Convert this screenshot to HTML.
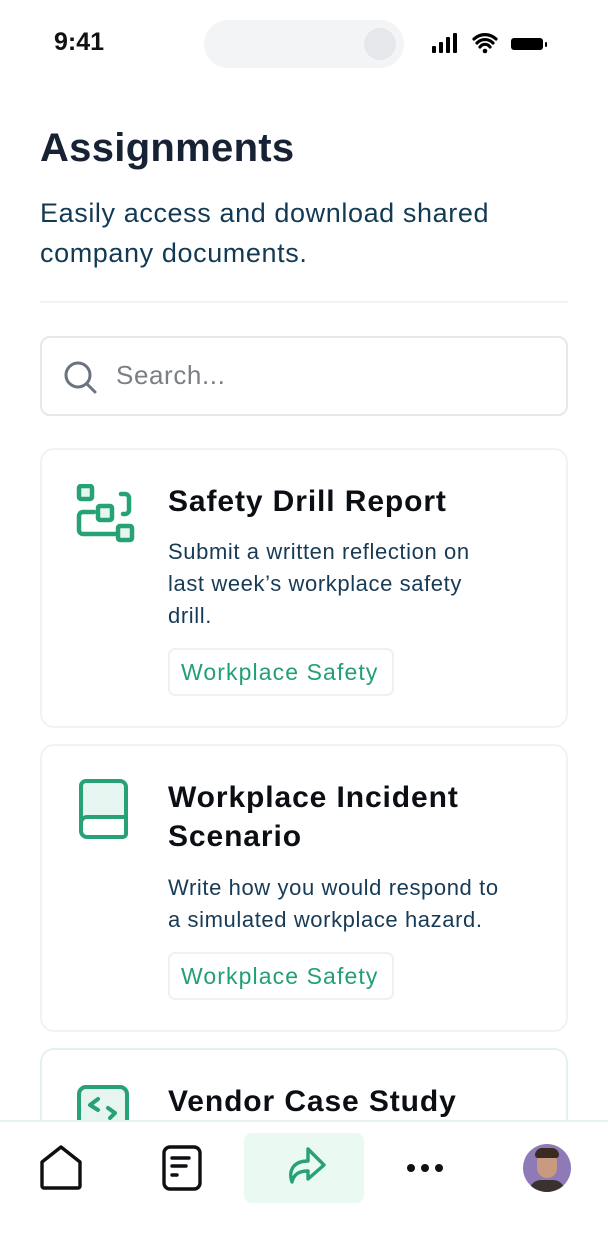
<!DOCTYPE html>
<html><head><meta charset="utf-8"><style>
*{margin:0;padding:0;box-sizing:border-box}
body{width:608px;height:1248px;background:#fff;font-family:"Liberation Sans",sans-serif;position:relative;overflow:hidden}
.a{position:absolute}
.card{position:absolute;left:40px;width:528px;border:2px solid #eef4f1;border-radius:14px;background:#fff}
.t{position:absolute;left:126px;font-size:30px;font-weight:600;color:#0b0f14;line-height:39px;letter-spacing:0.9px;white-space:nowrap}
.d{position:absolute;left:126px;font-size:22px;color:#173a55;line-height:32px;width:340px;letter-spacing:0.6px}
.tag{position:absolute;left:126px;height:48px;width:226px;border:2px solid #eef1f0;border-radius:7px;color:#22a074;font-size:23px;line-height:44px;padding-left:11px;letter-spacing:1.1px;white-space:nowrap}
</style></head><body>
<div class="a" style="left:54px;top:28px;font-size:25px;font-weight:600;color:#111">9:41</div>
<div class="a" style="left:204px;top:20px;width:200px;height:48px;border-radius:24px;background:#f2f4f5"></div>
<div class="a" style="left:364px;top:28px;width:32px;height:32px;border-radius:16px;background:#e5e7eb"></div>
<svg class="a" style="left:430px;top:32px" width="124" height="24" viewBox="0 0 124 24">
<rect x="2" y="14" width="4" height="7" rx="1" fill="#000"/><rect x="9" y="10" width="4" height="11" rx="1" fill="#000"/><rect x="16" y="5" width="4" height="16" rx="1" fill="#000"/><rect x="23" y="1" width="4" height="20" rx="1" fill="#000"/>
<path d="M44 7a16 16 0 0 1 22 0M47 11a11 11 0 0 1 16 0M50 15a6 6 0 0 1 10 0" stroke="#000" stroke-width="3.2" fill="none" stroke-linecap="round"/><circle cx="55" cy="19" r="2.3" fill="#000"/>
<rect x="81" y="6" width="32" height="12" rx="3" fill="#000"/><rect x="115" y="10" width="2" height="5" rx="1" fill="#000"/>
</svg>
<div class="a" style="left:40px;top:126px;font-size:40px;font-weight:700;color:#172235;letter-spacing:0.3px">Assignments</div>
<div class="a" style="left:40px;top:193px;font-size:27px;color:#133a55;line-height:40px;width:540px;letter-spacing:0.6px">Easily access and download shared<br>company documents.</div>
<div class="a" style="left:40px;top:301px;width:528px;height:2px;background:#f1f4f4"></div>
<div class="a" style="left:40px;top:336px;width:528px;height:80px;border:2px solid #e5e7eb;border-radius:10px"></div>
<svg class="a" style="left:62px;top:358px" width="38" height="38" viewBox="0 0 38 38"><circle cx="16" cy="17" r="12" stroke="#6b7280" stroke-width="3" fill="none"/><path d="M25 26l8 8" stroke="#6b7280" stroke-width="3" stroke-linecap="round"/></svg>
<div class="a" style="left:116px;top:360px;font-size:26px;color:#7b7f85;letter-spacing:0.6px">Search...</div>

<div class="card" style="top:448px;height:280px">
<svg class="a" style="left:33px;top:34px" width="62" height="62" viewBox="74 482 62 62" fill="none" stroke="#26a274" stroke-width="4.5" stroke-linejoin="round" stroke-linecap="round">
<rect x="78" y="484" width="13" height="13" rx="2" fill="#e6f5ef"/><rect x="97" y="504" width="14" height="14" rx="2" fill="#e6f5ef"/><rect x="117" y="524" width="14" height="14" rx="2" fill="#e6f5ef"/>
<path d="M120 492h4a4 4 0 0 1 4 4v12a4 4 0 0 1-4 4h-2"/><path d="M93 510h-11a4 4 0 0 0-4 4v14a4 4 0 0 0 4 4h32"/>
</svg>
<div class="t" style="top:32px">Safety Drill Report</div>
<div class="d" style="top:86px">Submit a written reflection on last week’s workplace safety drill.</div>
<div class="tag" style="top:198px">Workplace Safety</div>
</div>

<div class="card" style="top:744px;height:288px">
<svg class="a" style="left:36px;top:32px" width="52" height="62" viewBox="0 0 52 62" fill="none" stroke="#26a274" stroke-width="4">
<path d="M8 3h34a6 6 0 0 1 6 6v38H8a5 5 0 0 1-5-5V8a5 5 0 0 1 5-5z" fill="#e6f5ef"/><path d="M3 45a6 6 0 0 1 6-6h39v17a3 3 0 0 1-3 3H9a6 6 0 0 1-6-6z" fill="#fff"/>
</svg>
<div class="t" style="top:32px">Workplace Incident<br>Scenario</div>
<div class="d" style="top:126px;width:370px">Write how you would respond to<br>a simulated workplace hazard.</div>
<div class="tag" style="top:206px">Workplace Safety</div>
</div>

<div class="card" style="top:1048px;height:200px;border-color:#e3f2ec">
<svg class="a" style="left:34px;top:34px" width="56" height="56" viewBox="0 0 56 56" fill="none" stroke="#26a274" stroke-width="4" stroke-linecap="round" stroke-linejoin="round">
<rect x="3" y="3" width="48" height="48" rx="7" fill="#e6f5ef"/><path d="M22 15l-8 6 8 5M32 24l7 5-5 5"/>
</svg>
<div class="t" style="top:32px">Vendor Case Study</div>
</div>

<div class="a" style="left:0;top:1120px;width:608px;height:128px;background:#fff;border-top:2px solid #e8f3ef"></div>
<div class="a" style="left:244px;top:1133px;width:120px;height:70px;border-radius:8px;background:#eafaf2"></div>
<svg class="a" style="left:36px;top:1144px" width="50" height="48" viewBox="0 0 50 48" fill="none" stroke="#0d0f12" stroke-width="3.4" stroke-linejoin="round"><path d="M6 18L25 3l19 15v24a2 2 0 0 1-2 2H8a2 2 0 0 1-2-2z"/></svg>
<svg class="a" style="left:160px;top:1144px" width="44" height="48" viewBox="0 0 44 48" fill="none" stroke="#0d0f12" stroke-width="3.4" stroke-linecap="round"><rect x="4" y="3" width="36" height="42" rx="6"/><path d="M12 14h17M12 22h14M12 31h5"/></svg>
<svg class="a" style="left:280px;top:1146px" width="50" height="44" viewBox="0 0 50 44" fill="none" stroke="#26a274" stroke-width="3.4" stroke-linejoin="round" stroke-linecap="round"><path d="M28 3l16 16-16 14v-8c-9 0-14 3-16 11-4-12 2-21 16-21z"/></svg>
<div class="a" style="left:407px;top:1164px;width:38px;height:8px">
<span class="a" style="left:0;width:8px;height:8px;border-radius:4px;background:#111"></span><span class="a" style="left:14px;width:8px;height:8px;border-radius:4px;background:#111"></span><span class="a" style="left:28px;width:8px;height:8px;border-radius:4px;background:#111"></span></div>
<div class="a" style="left:523px;top:1144px;width:48px;height:48px;border-radius:24px;background:#8f7ab8;overflow:hidden">
<div class="a" style="left:14px;top:8px;width:20px;height:26px;border-radius:10px;background:#c89a80"></div>
<div class="a" style="left:12px;top:4px;width:24px;height:10px;border-radius:10px 10px 4px 4px;background:#3a2a22"></div>
<div class="a" style="left:6px;top:36px;width:36px;height:16px;border-radius:12px 12px 0 0;background:#3b3230"></div>
</div>
</body></html>
